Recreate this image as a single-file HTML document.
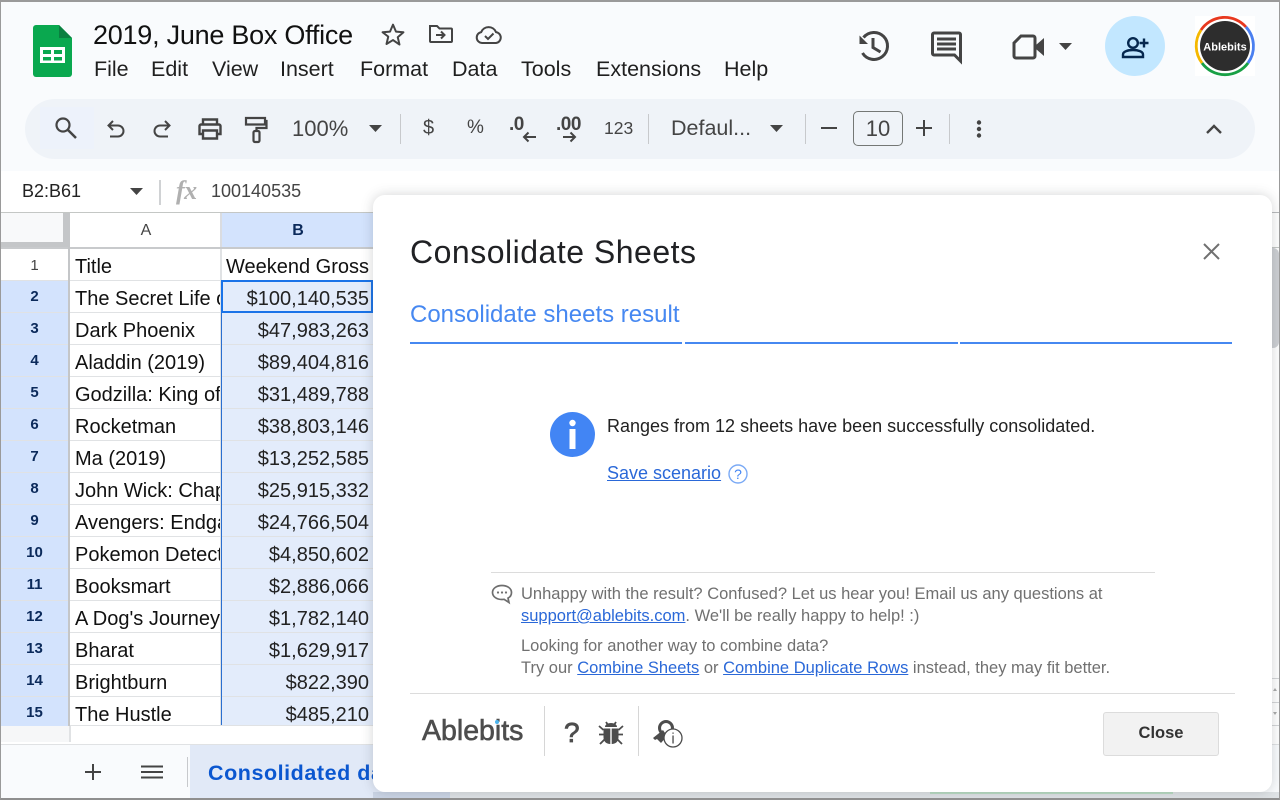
<!DOCTYPE html>
<html><head><meta charset="utf-8"><style>
*{box-sizing:border-box}
html,body{margin:0;padding:0}
body{width:1280px;height:800px;overflow:hidden;position:relative;background:#f9fbfd;font-family:"Liberation Sans",sans-serif;color:#1f1f1f}
.a{position:absolute;white-space:nowrap}
.m{top:57px;font-size:21.5px;line-height:24px;color:#1f1f1f}
.rh{position:absolute;left:1px;width:67px;height:31px;background:#d3e3fd;color:#0b2a5b;font-weight:bold;font-size:15px;line-height:32px;text-align:center}
.ca{position:absolute;left:70px;width:150px;height:31px;background:#fff;font-size:20px;line-height:36px;padding-left:5px;overflow:hidden;white-space:nowrap;color:#111}
.cb{position:absolute;left:222px;width:151px;height:31px;background:#e3ecfb;font-size:20px;line-height:36px;padding-right:4px;text-align:right;overflow:hidden;white-space:nowrap;color:#222}
.sep{position:absolute;width:1px;background:#c7c9cc}
a{color:#2a68d8;text-decoration:underline}
.g{color:#707070}
svg{position:absolute;overflow:visible}
</style></head><body>

<!-- Sheets logo -->
<svg style="left:33px;top:25px" width="39" height="52" viewBox="0 0 39 52"><path d="M3 0H26L39 13V49a3 3 0 0 1-3 3H3a3 3 0 0 1-3-3V3a3 3 0 0 1 3-3z" fill="#0aa84f"/><path d="M26 0L39 13H26z" fill="#0a8040"/><path d="M7 22H32V38H7z" fill="#fff"/><path d="M10 25H18V29H10zM21 25H29V29H21zM10 32H18V35.500H10zM21 32H29V35.500H21z" fill="#0aa84f"/></svg>

<div class="a" style="left:93px;top:19px;font-size:27px;line-height:32px;color:#111;letter-spacing:-.25px">2019, June Box Office</div>
<svg style="left:381px;top:23px" width="24" height="22" viewBox="1.500 1.500 21 20"><path d="M12 3l2.700 6.300 6.800.6-5.200 4.500 1.600 6.700L12 17l-5.900 3.600 1.600-6.700L2.500 9.900l6.800-.6z" fill="none" stroke="#444" stroke-width="1.800" stroke-linejoin="round"/></svg>
<svg style="left:428px;top:23px" width="26" height="22" viewBox="0 0 26 22"><path d="M2 3h7l2.500 2.500H23a1 1 0 0 1 1 1V18a1 1 0 0 1-1 1H3a1 1 0 0 1-1-1z" fill="none" stroke="#444" stroke-width="2"/><path d="M8 12h8M13 8.500l3.500 3.500-3.500 3.500" fill="none" stroke="#444" stroke-width="2"/></svg>
<svg style="left:475px;top:24px" width="28" height="22" viewBox="0 0 28 22"><path d="M7 19a5.500 5.500 0 0 1-.8-10.900A8 8 0 0 1 21 8.100 5.500 5.500 0 0 1 21 19z" fill="none" stroke="#444" stroke-width="2"/><path d="M10 12l3 3 5.500-5.500" fill="none" stroke="#444" stroke-width="2"/></svg>

<div class="a m" style="left:94px">File</div>
<div class="a m" style="left:151px">Edit</div>
<div class="a m" style="left:212px">View</div>
<div class="a m" style="left:280px">Insert</div>
<div class="a m" style="left:360px">Format</div>
<div class="a m" style="left:452px">Data</div>
<div class="a m" style="left:521px">Tools</div>
<div class="a m" style="left:596px">Extensions</div>
<div class="a m" style="left:724px">Help</div>

<!-- top right icons -->
<svg style="left:856px;top:29px" width="36" height="34" viewBox="0 0 36 34"><path d="M7.500 8.500A13.500 13.500 0 1 1 6.500 24" fill="none" stroke="#444" stroke-width="3"/><path d="M3.500 6.500V15H12z" fill="#444"/><path d="M17 9v9.500l7.500 4.500" fill="none" stroke="#444" stroke-width="3"/></svg>
<svg style="left:931px;top:31px" width="32" height="32" viewBox="0 0 32 32"><path d="M3 2h25a1.500 1.500 0 0 1 1.500 1.500V30l-6-6H3a1.500 1.500 0 0 1-1.500-1.500v-19A1.500 1.500 0 0 1 3 2z" fill="none" stroke="#444" stroke-width="3"/><path d="M6 8h19M6 13h19M6 18h19" stroke="#444" stroke-width="3"/></svg>
<svg style="left:1012px;top:34px" width="34" height="26" viewBox="0 0 34 26"><path d="M9 2h12a2 2 0 0 1 2 2v18a2 2 0 0 1-2 2H4a2 2 0 0 1-2-2V9z" fill="none" stroke="#444" stroke-width="3"/><path d="M24 11l8-7v18l-8-7z" fill="#444"/></svg>
<svg style="left:1059px;top:43px" width="13" height="7" viewBox="0 0 13 7"><path d="M0 0h13L6.500 7z" fill="#444"/></svg>
<div class="a" style="left:1105px;top:16px;width:60px;height:60px;border-radius:50%;background:#c2e7ff"></div>
<svg style="left:1120px;top:35px" width="30" height="24" viewBox="0 0 30 24"><circle cx="13" cy="8" r="4.800" fill="none" stroke="#06284f" stroke-width="2.400"/><path d="M3 22v-2.500c0-3 5-4.500 10-4.500s10 1.500 10 4.500V22z" fill="none" stroke="#06284f" stroke-width="2.400"/><path d="M19.500 8h9M24 3.500v9" stroke="#06284f" stroke-width="2.400"/></svg>
<div class="a" style="left:1195px;top:16px;width:60px;height:60px;background:#fff"></div>
<svg style="left:1195px;top:16px" width="60" height="60" viewBox="0 0 60 60"><circle cx="30" cy="30" r="25" fill="#2d2d2d"/><path d="M6 14A28.500 28.500 0 0 1 51 11" fill="none" stroke="#e8381f" stroke-width="2.800"/><path d="M51 11A28.500 28.500 0 0 1 53 47" fill="none" stroke="#4a7ff0" stroke-width="2.800"/><path d="M53 47A28.500 28.500 0 0 1 7 47" fill="none" stroke="#18a045" stroke-width="2.800"/><path d="M7 47A28.500 28.500 0 0 1 6 14" fill="none" stroke="#f5b800" stroke-width="2.800"/><text x="30" y="34.500" text-anchor="middle" fill="#fff" font-family="Liberation Sans" font-weight="bold" font-size="11">Ablebits</text></svg>

<!-- toolbar -->
<div class="a" style="left:25px;top:99px;width:1230px;height:60px;border-radius:30px;background:#eff3f8"></div>
<div class="a" style="left:40px;top:107px;width:54px;height:42px;background:#edf2fb"></div>
<svg style="left:54px;top:116px" width="24" height="24" viewBox="0 0 24 24"><circle cx="9" cy="9" r="6.500" fill="none" stroke="#444" stroke-width="2.200"/><path d="M14 14l8 8" stroke="#444" stroke-width="2.500"/></svg>
<svg style="left:106px;top:119px" width="20" height="20" viewBox="0 0 20 20"><path d="M7 2L2.500 6.500 7 11" fill="none" stroke="#444" stroke-width="2"/><path d="M3 6.500h9a5 5 0 0 1 0 11H4" fill="none" stroke="#444" stroke-width="2"/></svg>
<svg style="left:152px;top:119px" width="20" height="20" viewBox="0 0 20 20"><path d="M13 2l4.500 4.500L13 11" fill="none" stroke="#444" stroke-width="2"/><path d="M17 6.500H8a5 5 0 0 0 0 11h8" fill="none" stroke="#444" stroke-width="2"/></svg>
<svg style="left:198px;top:117px" width="24" height="24" viewBox="0 0 24 24"><path d="M5 8V2.500h14V8M5 17H1.500V9a1.500 1.500 0 0 1 1.500-1.500h18A1.500 1.500 0 0 1 22.500 9v8H19M5 13.500h14v8H5z" fill="none" stroke="#444" stroke-width="2.400"/></svg>
<svg style="left:244px;top:116px" width="24" height="28" viewBox="0 0 24 28"><path d="M2 2h19v6.500H2zM21 5h1.500v7H12.500v3" fill="none" stroke="#444" stroke-width="2.200"/><rect x="9.500" y="15" width="6" height="11" rx="1.500" fill="none" stroke="#444" stroke-width="2.200"/></svg>
<div class="a" style="left:292px;top:116px;font-size:22px;line-height:26px;color:#444">100%</div>
<svg style="left:369px;top:125px" width="13" height="7" viewBox="0 0 13 7"><path d="M0 0h13L6.500 7z" fill="#444"/></svg>
<div class="sep" style="left:400px;top:114px;height:30px"></div>
<div class="a" style="left:423px;top:116px;font-size:20px;line-height:24px;color:#444">$</div>
<div class="a" style="left:467px;top:116px;font-size:19px;line-height:24px;color:#444">%</div>
<div class="a" style="left:509px;top:114px;font-size:19px;line-height:22px;color:#444;font-weight:bold;letter-spacing:-.5px">.0</div>
<svg style="left:522px;top:131px" width="14" height="12" viewBox="0 0 14 12"><path d="M14 6H2M6.500 1.500L2 6l4.500 4.500" fill="none" stroke="#444" stroke-width="2"/></svg>
<div class="a" style="left:556px;top:114px;font-size:19px;line-height:22px;color:#444;font-weight:bold;letter-spacing:-.5px">.00</div>
<svg style="left:563px;top:131px" width="14" height="12" viewBox="0 0 14 12"><path d="M0 6h12M7.500 1.500L12 6l-4.500 4.500" fill="none" stroke="#444" stroke-width="2"/></svg>
<div class="a" style="left:604px;top:117px;font-size:17.500px;line-height:22px;color:#444">123</div>
<div class="sep" style="left:648px;top:114px;height:30px"></div>
<div class="a" style="left:671px;top:115px;font-size:21.500px;line-height:26px;color:#444">Defaul...</div>
<svg style="left:770px;top:125px" width="13" height="7" viewBox="0 0 13 7"><path d="M0 0h13L6.500 7z" fill="#444"/></svg>
<div class="sep" style="left:805px;top:114px;height:30px"></div>
<div class="a" style="left:821px;top:127px;width:16px;height:2px;background:#444"></div>
<div class="a" style="left:853px;top:111px;width:50px;height:35px;border:1px solid #747775;border-radius:5px;text-align:center;font-size:22px;line-height:33px;color:#444">10</div>
<svg style="left:916px;top:120px" width="16" height="16" viewBox="0 0 16 16"><path d="M0 8h16M8 0v16" stroke="#444" stroke-width="2"/></svg>
<div class="sep" style="left:949px;top:114px;height:30px"></div>
<svg style="left:976px;top:120px" width="6" height="18" viewBox="0 0 6 18"><circle cx="3" cy="2.500" r="2.200" fill="#444"/><circle cx="3" cy="9" r="2.200" fill="#444"/><circle cx="3" cy="15.500" r="2.200" fill="#444"/></svg>
<svg style="left:1205px;top:123px" width="18" height="12" viewBox="0 0 18 12"><path d="M2 10l7-7 7 7" fill="none" stroke="#444" stroke-width="2.400"/></svg>

<!-- formula bar -->
<div class="a" style="left:1px;top:171px;width:1278px;height:42px;background:#fff"></div>
<div class="a" style="left:22px;top:179px;font-size:18px;line-height:24px;color:#222">B2:B61</div>
<svg style="left:130px;top:188px" width="13" height="7" viewBox="0 0 13 7"><path d="M0 0h13L6.500 7z" fill="#444"/></svg>
<div class="sep" style="left:159px;top:180px;height:25px;width:2px;background:#d0d2d4"></div>
<div class="a" style="left:176px;top:178px;font-family:'Liberation Serif',serif;font-style:italic;font-weight:bold;font-size:26px;line-height:26px;color:#b0b0b0;letter-spacing:-.5px">fx</div>
<div class="a" style="left:211px;top:179px;font-size:18px;line-height:24px;color:#444">100140535</div>

<!-- grid -->
<div class="a" style="left:1px;top:213px;width:1278px;height:532px;background:#fff"></div>
<div class="a" style="left:1px;top:212px;width:1278px;height:1px;background:#c4c7c5"></div>
<div class="a" style="left:1px;top:213px;width:68px;height:36px;background:#f8f9fa"></div>
<div class="a" style="left:63px;top:213px;width:7px;height:35px;background:#c4c6c8"></div>
<div class="a" style="left:1px;top:242px;width:62px;height:6px;background:#c4c6c8"></div>
<div class="a" style="left:71px;top:213px;width:150px;height:34px;text-align:center;font-size:16px;line-height:35px;color:#444">A</div>
<div class="a" style="left:220px;top:213px;width:2px;height:34px;background:#dadce0"></div>
<div class="a" style="left:223px;top:213px;width:150px;height:34px;background:#d3e3fd;text-align:center;font-size:16px;font-weight:bold;line-height:35px;color:#0b2a5b">B</div>
<div class="a" style="left:222px;top:213px;width:1px;height:34px;background:#d3e3fd"></div>
<div class="a" style="left:1px;top:247px;width:372px;height:2px;background:#c8cacc"></div>

<!-- grid background lines -->
<div class="a" style="left:1px;top:249px;width:372px;height:477px;background:#e0e2e4;z-index:0"></div>
<div class="a" style="left:68px;top:247px;width:2px;height:479px;background:#c4c6c8"></div>

<div class="a" style="left:1px;top:249px;width:67px;height:31px;background:#fff;text-align:center;font-size:15px;line-height:33px;color:#444">1</div>
<div class="ca" style="top:249px">Title</div><div class="cb" style="top:249px;background:#fff;color:#111">Weekend Gross</div>

<div class="rh" style="top:281px">2</div><div class="ca" style="top:281px">The Secret Life of</div><div class="cb" style="top:281px">$100,140,535</div>
<div class="rh" style="top:313px">3</div><div class="ca" style="top:313px">Dark Phoenix</div><div class="cb" style="top:313px">$47,983,263</div>
<div class="rh" style="top:345px">4</div><div class="ca" style="top:345px">Aladdin (2019)</div><div class="cb" style="top:345px">$89,404,816</div>
<div class="rh" style="top:377px">5</div><div class="ca" style="top:377px">Godzilla: King of</div><div class="cb" style="top:377px">$31,489,788</div>
<div class="rh" style="top:409px">6</div><div class="ca" style="top:409px">Rocketman</div><div class="cb" style="top:409px">$38,803,146</div>
<div class="rh" style="top:441px">7</div><div class="ca" style="top:441px">Ma (2019)</div><div class="cb" style="top:441px">$13,252,585</div>
<div class="rh" style="top:473px">8</div><div class="ca" style="top:473px">John Wick: Chapter</div><div class="cb" style="top:473px">$25,915,332</div>
<div class="rh" style="top:505px">9</div><div class="ca" style="top:505px">Avengers: Endgame</div><div class="cb" style="top:505px">$24,766,504</div>
<div class="rh" style="top:537px">10</div><div class="ca" style="top:537px">Pokemon Detective</div><div class="cb" style="top:537px">$4,850,602</div>
<div class="rh" style="top:569px">11</div><div class="ca" style="top:569px">Booksmart</div><div class="cb" style="top:569px">$2,886,066</div>
<div class="rh" style="top:601px">12</div><div class="ca" style="top:601px">A Dog's Journey</div><div class="cb" style="top:601px">$1,782,140</div>
<div class="rh" style="top:633px">13</div><div class="ca" style="top:633px">Bharat</div><div class="cb" style="top:633px">$1,629,917</div>
<div class="rh" style="top:665px">14</div><div class="ca" style="top:665px">Brightburn</div><div class="cb" style="top:665px">$822,390</div>
<div class="rh" style="top:697px">15</div><div class="ca" style="top:697px;height:28px">The Hustle</div><div class="cb" style="top:697px;height:28px">$485,210</div>

<!-- selection -->
<div class="a" style="left:221px;top:281px;width:1px;height:444px;background:#2a6fd0"></div>
<div class="a" style="left:221px;top:280px;width:152px;height:33px;border:2px solid #1a73e8"></div>

<!-- below grid -->
<div class="a" style="left:1px;top:726px;width:1278px;height:19px;background:#fff"></div>
<div class="a" style="left:1px;top:726px;width:69px;height:16px;background:#f6f7f8"></div>
<div class="a" style="left:69px;top:726px;width:2px;height:16px;background:#e0e2e4"></div>

<!-- sheet bar -->
<div class="a" style="left:1px;top:744px;width:1278px;height:56px;background:#f9fbfd;border-top:1px solid #e0e2e4"></div>
<svg style="left:85px;top:764px" width="16" height="16" viewBox="0 0 16 16"><path d="M0 8h16M8 0v16" stroke="#444" stroke-width="2"/></svg>
<svg style="left:141px;top:765px" width="22" height="14" viewBox="0 0 22 14"><path d="M0 1.500h22M0 7h22M0 12.500h22" stroke="#444" stroke-width="2"/></svg>
<div class="sep" style="left:187px;top:757px;height:30px"></div>
<div class="a" style="left:190px;top:745px;width:260px;height:55px;background:#e1e9f7"></div>
<div class="a" style="left:208px;top:760px;font-size:21.500px;line-height:26px;font-weight:bold;color:#0b57d0;letter-spacing:.55px">Consolidated data</div>
<div class="a" style="left:373px;top:792px;width:77px;height:8px;background:#cbd5e6"></div>
<div class="a" style="left:450px;top:792px;width:830px;height:8px;background:#dfe3e6"></div>
<div class="a" style="left:930px;top:792px;width:243px;height:2px;background:#b9dcc3"></div>

<!-- right-side scrollbar -->
<div class="a" style="left:1272px;top:248px;width:7px;height:100px;background:#cdcfd3;border-radius:0 6px 6px 0"></div>
<div class="a" style="left:1272px;top:212px;width:7px;height:1px;background:#b8babc"></div>
<div class="a" style="left:1272px;top:247px;width:7px;height:1px;background:#c4c7c5"></div>
<div class="a" style="left:1272px;top:678px;width:8px;height:1px;background:#d4d6d8"></div>
<div class="a" style="left:1272px;top:702px;width:8px;height:1px;background:#d4d6d8"></div>
<div class="a" style="left:1272px;top:725px;width:8px;height:1px;background:#d4d6d8"></div>
<svg style="left:1272px;top:687px" width="8" height="6" viewBox="0 0 8 6"><path d="M1 4l2-3 2 3z" fill="#aaa"/></svg>
<svg style="left:1272px;top:711px" width="8" height="6" viewBox="0 0 8 6"><path d="M1 1l2 3 2-3z" fill="#aaa"/></svg>

<!-- dialog -->
<div class="a" style="left:373px;top:195px;width:899px;height:597px;background:#fff;border-radius:12px;box-shadow:0 0 12px rgba(60,64,67,.22)"></div>
<div class="a" style="left:410px;top:233px;font-size:32px;line-height:38px;color:#202124;letter-spacing:.5px">Consolidate Sheets</div>
<svg style="left:1203px;top:243px" width="17" height="17" viewBox="0 0 17 17"><path d="M1 1l15 15M16 1L1 16" stroke="#707070" stroke-width="2"/></svg>
<div class="a" style="left:410px;top:301px;font-size:24px;line-height:28px;color:#4688f1">Consolidate sheets result</div>
<div class="a" style="left:410px;top:342px;width:272px;height:2px;background:#4688f1"></div>
<div class="a" style="left:685px;top:342px;width:273px;height:2px;background:#4688f1"></div>
<div class="a" style="left:960px;top:342px;width:272px;height:2px;background:#4688f1"></div>

<svg style="left:550px;top:412px" width="45" height="45" viewBox="0 0 45 45"><circle cx="22.500" cy="22.500" r="22.500" fill="#4285f4"/><circle cx="22.500" cy="11" r="3.200" fill="#fff"/><rect x="19.500" y="17" width="6" height="20" fill="#fff"/></svg>
<div class="a" style="left:607px;top:414px;font-size:18px;line-height:24px;color:#222">Ranges from 12 sheets have been successfully consolidated.</div>
<div class="a" style="left:607px;top:461px;font-size:18px;line-height:24px"><a>Save scenario</a></div>
<svg style="left:728px;top:464px" width="20" height="20" viewBox="0 0 20 20"><circle cx="10" cy="10" r="9" fill="none" stroke="#7baaf5" stroke-width="1.400"/><text x="10" y="15" text-anchor="middle" font-family="Liberation Sans" font-size="14" fill="#4285f4">?</text></svg>

<div class="a" style="left:491px;top:572px;width:664px;height:1px;background:#dcdcdc"></div>
<svg style="left:491px;top:584px" width="22" height="20" viewBox="0 0 22 20"><path d="M11 1.500c5.500 0 9.500 3 9.500 7 0 2.500-1.300 4.500-3.500 5.600l1 4.400-5-3.200c-.6.100-1.300.2-2 .2-5.500 0-9.500-3-9.500-7s4-7 9.500-7z" fill="none" stroke="#6e6e6e" stroke-width="1.700"/><circle cx="7" cy="8.500" r="1.100" fill="#6e6e6e"/><circle cx="11" cy="8.500" r="1.100" fill="#6e6e6e"/><circle cx="15" cy="8.500" r="1.100" fill="#6e6e6e"/></svg>
<div class="a g" style="left:521px;top:583px;font-size:16.500px;line-height:22px">Unhappy with the result? Confused? Let us hear you! Email us any questions at</div>
<div class="a g" style="left:521px;top:605px;font-size:16.500px;line-height:22px"><a>support@ablebits.com</a>. We'll be really happy to help! :)</div>
<div class="a g" style="left:521px;top:635px;font-size:16.500px;line-height:22px">Looking for another way to combine data?</div>
<div class="a g" style="left:521px;top:657px;font-size:16.500px;line-height:22px">Try our <a>Combine Sheets</a> or <a>Combine Duplicate Rows</a> instead, they may fit better.</div>

<div class="a" style="left:410px;top:693px;width:825px;height:1px;background:#dcdcdc"></div>
<div class="a" style="left:422px;top:713px;font-size:28.500px;line-height:36px;color:#4d4d4d;-webkit-text-stroke:.6px #4d4d4d">Ablebits</div>
<div class="a" style="left:495px;top:720px;width:4px;height:4px;border-radius:50%;background:#4db5ee"></div>
<div class="sep" style="left:544px;top:706px;height:50px;background:#d6d6d6"></div>
<div class="a" style="left:564px;top:716px;font-size:28px;line-height:34px;color:#4d4d4d;-webkit-text-stroke:.8px #4d4d4d">?</div>
<svg style="left:599px;top:721px" width="24" height="25" viewBox="0 0 24 25"><path d="M6 6a6 4 0 0 1 12 0z" fill="#4d4d4d"/><path d="M4.500 7.500h6.800V23c-4 0-6.800-2.500-6.800-7zM19.500 7.500h-6.800V23c4 0 6.800-2.500 6.800-7z" fill="#4d4d4d"/><path d="M7 1l2 3M17 1l-2 3M0 5l4.500 4M24 5l-4.500 4M0 13.500h4.500M24 13.500h-4.500M1 23l4.500-4.500M23 23l-4.500-4.500" stroke="#4d4d4d" stroke-width="1.800"/></svg>
<div class="sep" style="left:638px;top:706px;height:50px;background:#d6d6d6"></div>
<svg style="left:652px;top:719px" width="32" height="30" viewBox="0 0 32 30"><circle cx="14" cy="9" r="6.500" fill="none" stroke="#4d4d4d" stroke-width="3"/><path d="M11 11L1 19l2 2 2-1 2 2 2 2 6-7z" fill="#4d4d4d"/><circle cx="21" cy="19" r="9" fill="#fff" stroke="#4d4d4d" stroke-width="1.300"/><text x="21" y="24.500" text-anchor="middle" font-family="Liberation Sans" font-size="15" fill="#4d4d4d">i</text></svg>
<div class="a" style="left:1103px;top:712px;width:116px;height:44px;background:#f2f2f2;border:1px solid #dcdcdc;border-radius:3px;text-align:center;font-size:16.500px;line-height:41px;font-weight:bold;color:#333">Close</div>

<!-- window border -->
<div class="a" style="left:0;top:0;width:1280px;height:800px;border:1px solid #9a9a9a;border-bottom:2px solid #8f8f8f;border-top:2px solid #9a9a9a;pointer-events:none"></div>
</body></html>
